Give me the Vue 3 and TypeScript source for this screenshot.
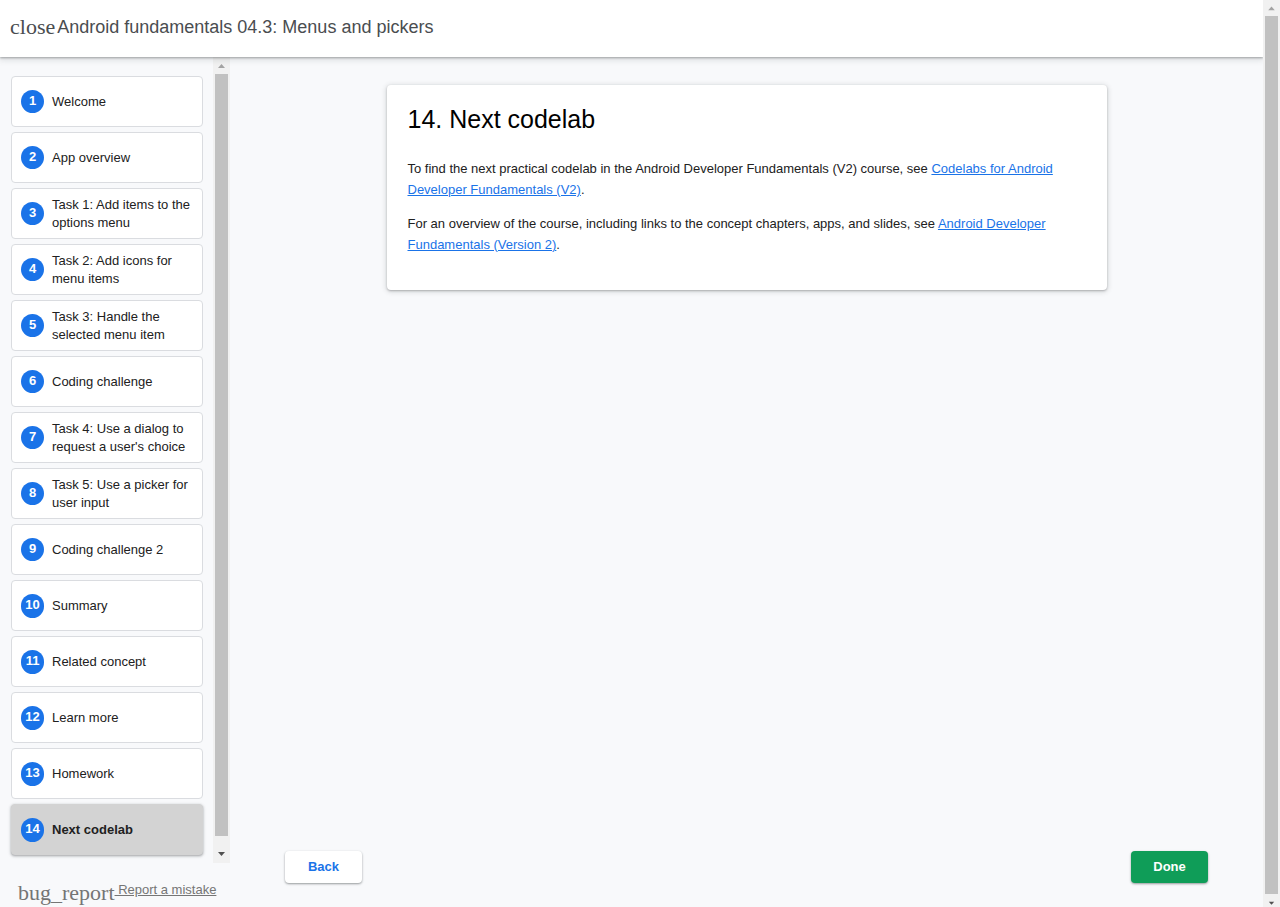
<script setup lang="ts">
interface Step {
  id: number
  label: string
}

const labels: string[] = [
  'Welcome',
  'App overview',
  'Task 1: Add items to the options menu',
  'Task 2: Add icons for menu items',
  'Task 3: Handle the selected menu item',
  'Coding challenge',
  "Task 4: Use a dialog to request a user's choice",
  'Task 5: Use a picker for user input',
  'Coding challenge 2',
  'Summary',
  'Related concept',
  'Learn more',
  'Homework',
  'Next codelab',
]

const steps: Step[] = labels.map((label, i) => ({ id: i + 1, label }))
const current = 14
</script>

<template>
  <div class="page">
    <div class="app">
      <header class="header">
        <a href="#" class="close" aria-label="Close">close</a>
        <h1 class="title">Android fundamentals 04.3: Menus and pickers</h1>
      </header>
      <div class="body">
        <aside class="drawer">
          <div class="drawer-scroll">
            <nav class="steps" aria-label="Steps">
              <a
                v-for="step in steps"
                :key="step.id"
                href="#"
                class="step"
                :class="{ selected: step.id === current }"
              >
                <span class="number" :class="{ wide: step.id > 9 }">{{ step.id }}</span>
                <span class="label">{{ step.label }}</span>
              </a>
            </nav>
            <div class="scrollbar" aria-hidden="true">
              <svg class="arrow" viewBox="0 0 17 17"><path d="M5 11L8.5 7L12 11Z" fill="#a3a3a3" /></svg>
              <div class="thumb"></div>
              <svg class="arrow end" viewBox="0 0 17 17"><path d="M5 6L8.5 10L12 6Z" fill="#505050" /></svg>
            </div>
          </div>
          <div class="report">
            <a href="#" class="report-link"><span class="bug">bug_report</span><span class="report-text">&nbsp;Report a mistake</span></a>
          </div>
        </aside>
        <main class="content">
          <article class="card">
            <h2 class="card-title">14. Next codelab</h2>
            <p>
              To find the next practical codelab in the Android Developer Fundamentals (V2) course, see
              <a href="#">Codelabs for Android Developer Fundamentals (V2)</a>.
            </p>
            <p>
              For an overview of the course, including links to the concept chapters, apps, and slides, see
              <a href="#">Android Developer Fundamentals (Version 2)</a>.
            </p>
          </article>
          <div class="controls">
            <button type="button" class="btn back">Back</button>
            <button type="button" class="btn done">Done</button>
          </div>
        </main>
      </div>
    </div>
    <div class="scrollbar page-scrollbar" aria-hidden="true">
      <svg class="arrow" viewBox="0 0 17 17"><path d="M5 11L8.5 7L12 11Z" fill="#a3a3a3" /></svg>
      <div class="thumb"></div>
      <svg class="arrow" viewBox="0 0 17 17"><path d="M5 10L8.5 14L12 10Z" fill="#505050" /></svg>
    </div>
  </div>
</template>

<style>
body {
  margin: 0;
  background: #f8f9fb;
}
</style>

<style scoped>
.page {
  display: flex;
  height: 100vh;
  overflow: hidden;
  font-family: 'Liberation Sans', Arial, sans-serif;
  font-size: 13px;
  color: #212121;
}
.page * {
  box-sizing: border-box;
}
.app {
  display: flex;
  flex: 1;
  min-width: 0;
  flex-direction: column;
}
.header {
  position: relative;
  z-index: 1;
  display: flex;
  flex: none;
  align-items: center;
  gap: 2px;
  height: 57px;
  padding: 0 10px 4px;
  background: #fff;
  box-shadow: 0 1px 2px rgba(60, 64, 67, 0.4), 0 2px 6px 1px rgba(60, 64, 67, 0.15);
}
.close {
  font: 22px/26px 'Liberation Serif', 'Times New Roman', serif;
  color: #4a4d50;
  text-decoration: none;
}
.title {
  margin: 0;
  font-size: 18px;
  line-height: 26px;
  font-weight: 400;
  color: #4a4d50;
}
.body {
  display: flex;
  flex: 1;
  min-height: 0;
}
.drawer {
  display: flex;
  flex: none;
  flex-direction: column;
  width: 230px;
}
.drawer-scroll {
  display: flex;
  flex: 1;
  min-height: 0;
}
.steps {
  display: flex;
  flex: 1;
  flex-direction: column;
  gap: 5px;
  padding: 19px 10px 0 11px;
}
.step {
  display: flex;
  flex: none;
  align-items: center;
  gap: 8px;
  height: 51px;
  padding: 0 9px;
  border: 1px solid #dadce0;
  border-radius: 4px;
  background: #fff;
  color: #212121;
  line-height: 18px;
  text-decoration: none;
}
.step.selected {
  border-color: #d3d3d3;
  background: #d3d3d3;
  font-weight: 700;
  box-shadow: 0 1px 2px rgba(60, 64, 67, 0.3), 0 1px 3px 1px rgba(60, 64, 67, 0.15);
}
.number {
  flex: none;
  width: 23px;
  height: 23px;
  border-radius: 12px;
  background: #1a73e8;
  color: #fff;
  font-weight: 700;
  line-height: 22px;
  text-align: center;
}
.number.wide {
  height: 24px;
}
.scrollbar {
  display: flex;
  flex: none;
  flex-direction: column;
  width: 17px;
  background: #f1f1f1;
}
.page-scrollbar {
  position: relative;
  z-index: 2;
}
.arrow {
  display: block;
  flex: none;
  width: 17px;
  height: 17px;
}
.page-scrollbar .arrow {
  height: 16px;
}
.page-scrollbar .arrow:last-child {
  height: 13px;
}
.arrow.end {
  margin-top: 10px;
}
.thumb {
  flex: 1;
  margin: 0 2px;
  background: #c1c1c1;
}
.report {
  flex: none;
  height: 44px;
  padding: 14px 0 0 18px;
  white-space: nowrap;
}
.report-link {
  display: flex;
  align-items: flex-start;
  color: #757575;
  text-decoration: none;
}
.bug {
  font: 22px/32px 'Liberation Serif', 'Times New Roman', serif;
}
.report-text {
  line-height: 26px;
  text-decoration: underline;
}
.content {
  display: flex;
  flex: 1;
  min-width: 0;
  flex-direction: column;
  justify-content: space-between;
  padding: 28px 55px 24px;
}
.card {
  width: 100%;
  max-width: 720px;
  margin: 0 auto;
  padding: 19px 21px 35px;
  border-radius: 4px;
  background: #fff;
  box-shadow: 0 1px 2px rgba(60, 64, 67, 0.3), 0 1px 5px 1px rgba(60, 64, 67, 0.18);
}
.card-title {
  margin: 0 0 23px;
  font-size: 25px;
  line-height: 31px;
  font-weight: 400;
  color: #000;
}
.card p {
  margin: 0 0 13px;
  line-height: 21px;
}
.card p:last-child {
  margin-bottom: 0;
}
.card a {
  color: #1a73e8;
}
.controls {
  display: flex;
  justify-content: space-between;
}
.btn {
  width: 77px;
  height: 32px;
  padding: 0;
  border: 0;
  border-radius: 4px;
  font: 700 13px/18px 'Liberation Sans', Arial, sans-serif;
  box-shadow: 0 1px 2px rgba(60, 64, 67, 0.4), 0 1px 3px rgba(60, 64, 67, 0.15);
}
.back {
  background: #fff;
  color: #1a73e8;
}
.done {
  background: #0f9d58;
  color: #fff;
}
</style>
